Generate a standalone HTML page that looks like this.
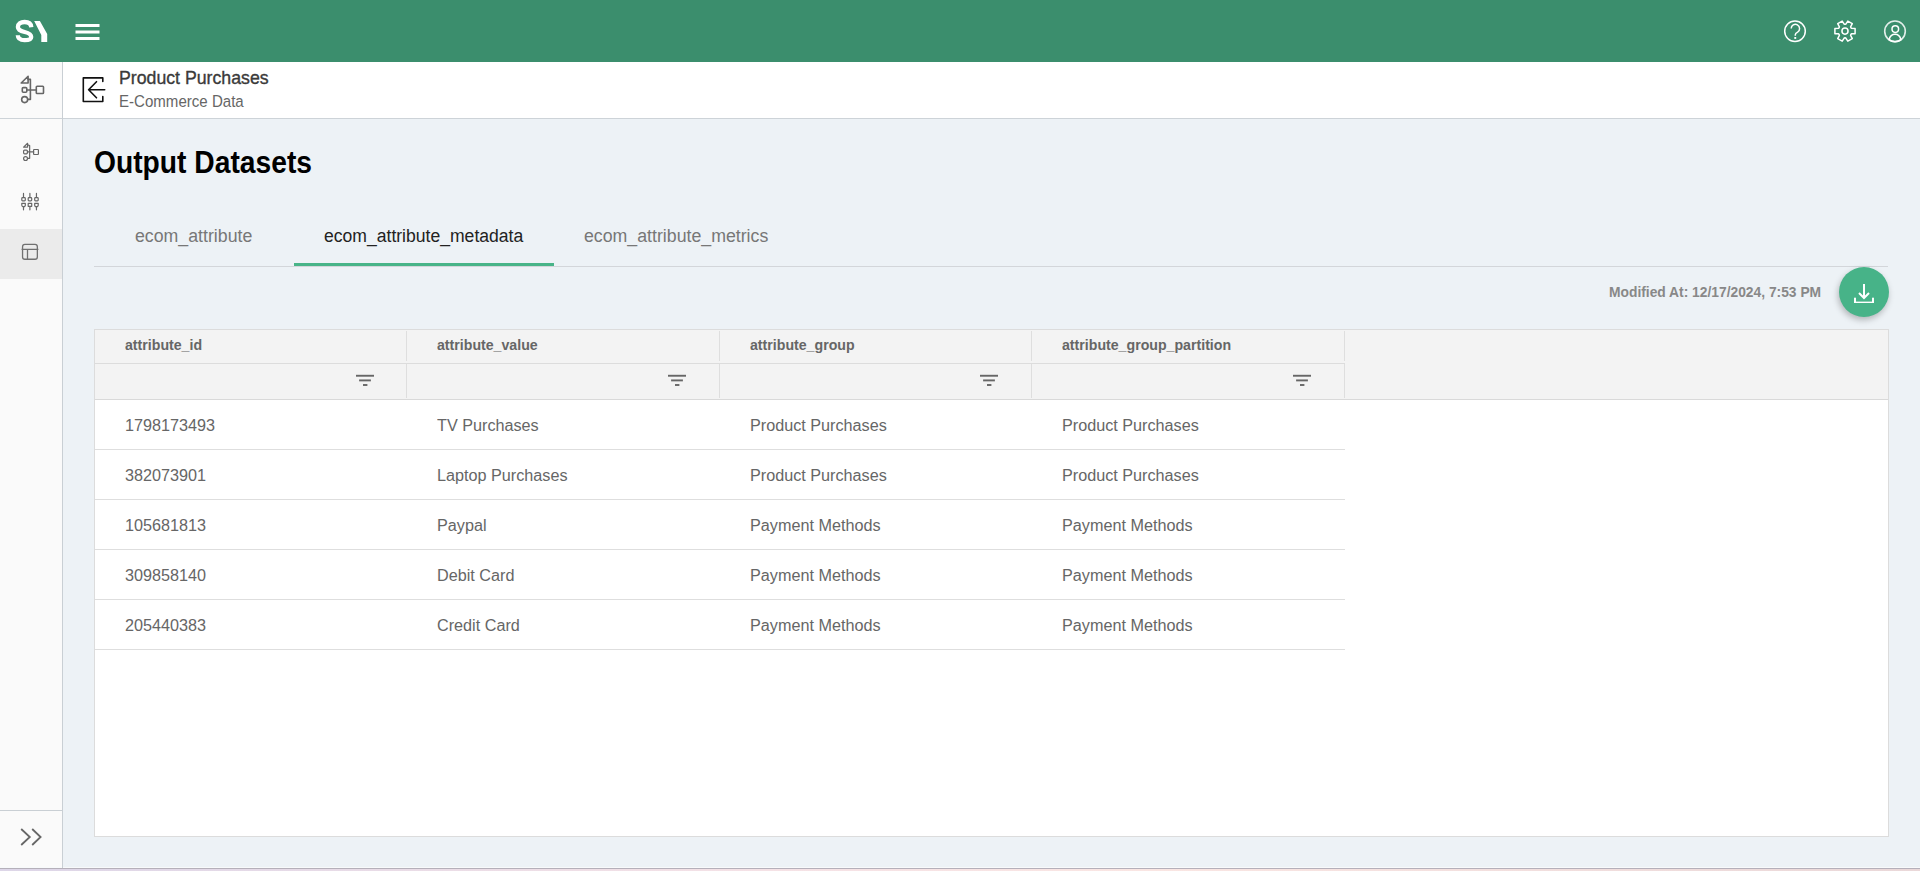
<!DOCTYPE html>
<html><head><meta charset="utf-8">
<style>
*{margin:0;padding:0;box-sizing:border-box}
html,body{width:1920px;height:871px;overflow:hidden;background:#edf2f6;font-family:"Liberation Sans",sans-serif}
.abs{position:absolute}
.t{position:absolute;white-space:nowrap;line-height:1;transform-origin:0 0}
#top{position:absolute;left:0;top:0;width:1920px;height:62px;background:#3b8e6d}
#side{position:absolute;left:0;top:62px;width:63px;height:805px;background:#fafafa;border-right:1px solid #c9cfd4}
#sub{position:absolute;left:63px;top:62px;width:1857px;height:57px;background:#fff;border-bottom:1px solid #cdd3d8}
#tabline{position:absolute;left:94px;top:266px;width:1794px;height:1px;background:#d3d6da}
#uline{position:absolute;left:294px;top:263px;width:260px;height:3px;background:#48b488}
#fab{position:absolute;left:1839px;top:267px;width:50px;height:50px;border-radius:50%;background:#47b388;box-shadow:-1px 3px 6px rgba(0,0,0,0.25)}
#tbl{position:absolute;left:94px;top:329px;width:1795px;height:508px;background:#fff;border:1px solid #dcdcdc}
#thead{position:absolute;left:0;top:0;width:1793px;height:70px;background:#f3f3f3;border-bottom:1px solid #d9d9d9}
.hsep{position:absolute;width:1px;background:#dedede}
.rowl{position:absolute;left:0;width:1250px;height:1px;background:#dedede}
.hd{font-weight:bold;font-size:14.6px;color:#666;transform:scaleX(0.97)}
.cell{font-size:16px;color:#666;transform:scaleX(1.012)}
.tab{font-size:18px;transform:scaleX(0.985)}
</style></head><body>
<div id="top">
  <svg class="abs" style="left:0;top:0" width="120" height="62" viewBox="0 0 120 62">
    <path d="M31.3 27.2 C31 23.6 28.2 22 24.6 22 C20.6 22 17.9 23.9 17.9 27 C17.9 30.3 21 31.2 24.6 32 C28.6 32.9 31.2 34 31.2 36.9 C31.2 39.9 28.3 40.1 24.6 40.1 C20.4 40.1 17.9 38.4 17.8 35.2" fill="none" stroke="#fff" stroke-width="4.3"/>
    <polygon points="34.2,21.1 39.9,21.1 47.2,33.9 47.2,42 41.3,42 41.3,35" fill="#fff"/>
    <rect x="75.5" y="24" width="24" height="3" fill="#fff"/>
    <rect x="75.5" y="30.5" width="24" height="3" fill="#fff"/>
    <rect x="75.5" y="37" width="24" height="3" fill="#fff"/>
  </svg>
  <svg class="abs" style="left:1760px;top:0" width="160" height="62" viewBox="1760 0 160 62">
    <circle cx="1795" cy="31.3" r="10.3" fill="none" stroke="#fff" stroke-width="1.5"/>
    <path d="M1791.2 28.6 A4.2 4.2 0 1 1 1797.6 32.1 Q1795.3 33.3 1795.3 34.8 V35.8" fill="none" stroke="#fff" stroke-width="1.5"/>
    <rect x="1794.3" y="37" width="1.9" height="1.9" fill="#fff"/>
    <path id="gear" d="M1851.43 28.34L1855.10 28.50L1855.10 33.70L1851.43 33.86Q1850.72 34.40 1850.61 35.29L1852.30 38.55L1847.80 41.15L1845.83 38.05Q1845.00 37.70 1844.17 38.05L1842.20 41.15L1837.70 38.55L1839.39 35.29Q1839.28 34.40 1838.57 33.86L1834.90 33.70L1834.90 28.50L1838.57 28.34Q1839.28 27.80 1839.39 26.91L1837.70 23.65L1842.20 21.05L1844.17 24.15Q1845.00 24.50 1845.83 24.15L1847.80 21.05L1852.30 23.65L1850.61 26.91Q1850.72 27.80 1851.43 28.34Z" fill="none" stroke="#fff" stroke-width="1.5" stroke-linejoin="round"/>
    <circle cx="1845" cy="31.1" r="3.05" fill="none" stroke="#fff" stroke-width="1.5"/>
    <circle cx="1895" cy="31.3" r="10.3" fill="none" stroke="#fff" stroke-opacity="0.85" stroke-width="1.6"/>
    <circle cx="1895.3" cy="29.1" r="3.3" fill="none" stroke="#fff" stroke-width="1.5"/>
    <path d="M1889 39.7 C1890 36 1892.3 34.3 1895 34.3 C1897.7 34.3 1900 36 1901 39.7 A10.3 10.3 0 0 1 1889 39.7 Z" fill="none" stroke="#fff" stroke-width="1.5"/>
  </svg>
</div>

<div id="side">
  <svg class="abs" style="left:0;top:-62px" width="62" height="930" viewBox="0 0 62 930" fill="none" stroke="#666" stroke-linejoin="round" stroke-linecap="round">
    <g stroke-width="1.6">
      <path d="M28.1 76.2 L21.2 83 H28.1 Z"/>
      <path d="M28.1 79.4 H30.4 V99.4 H27.8"/>
      <rect x="22.3" y="87.6" width="4.5" height="4.7" rx="1"/>
      <path d="M26.8 90 H36.3"/>
      <rect x="36.3" y="86.2" width="7.2" height="7.3" rx="0.8"/>
      <circle cx="24.65" cy="99.6" r="3"/>
    </g>
    <g stroke-width="1.2">
      <path d="M27.6 143.3 L23.6 147.1 H27.6 Z"/>
      <path d="M27.6 144.8 L29.65 145.6 V158.3 H28"/>
      <rect x="23.6" y="150.1" width="3.8" height="3.7" rx="1"/>
      <path d="M27.4 151.9 H33.6"/>
      <rect x="33.6" y="149.5" width="4.8" height="5" rx="0.5"/>
      <circle cx="25.55" cy="158.55" r="1.95"/>
    </g>
    <g stroke-width="1.2">
      <path d="M23.5 193.4 V197.5 M29.9 193.4 V197.5 M36.45 193.4 V197.5 M23.5 206.6 V209.8 M29.9 206.6 V209.8 M36.45 206.6 V209.8"/>
      <rect x="21.8" y="197.6" width="3.5" height="3.3" rx="0.8"/>
      <rect x="28.2" y="197.6" width="3.5" height="3.3" rx="0.8"/>
      <rect x="34.7" y="197.6" width="3.5" height="3.3" rx="0.8"/>
      <path d="M21.8 203.3 H25.3 V205.3 Q25.1 206.7 23.5 206.8 Q21.9 206.7 21.8 205.3 Z"/>
      <path d="M28.2 203.3 H31.7 V206.3 H28.2 Z"/>
      <path d="M34.7 203.3 H38.2 V205.3 Q38 206.7 36.45 206.8 Q34.9 206.7 34.7 205.3 Z"/>
    </g>
  </svg>
  <div class="abs" style="left:0;top:56px;width:62px;height:1px;background:#cdd3d8"></div>
  <div class="abs" style="left:0;top:167px;width:62px;height:50px;background:#ebebeb"></div>
  <svg class="abs" style="left:0;top:167px" width="62" height="50" viewBox="0 229 62 50" fill="none" stroke="#707070" stroke-width="1.3">
    <rect x="22.55" y="244.35" width="14.8" height="14.9" rx="2.3"/>
    <path d="M21.6 249.35 H38.4 M27.5 249.35 V260"/>
  </svg>
  <div class="abs" style="left:0;top:748px;width:62px;height:1px;background:#c9cfd4"></div>
  <svg class="abs" style="left:0;top:749px" width="62" height="56" viewBox="0 811 62 56" fill="none" stroke="#666" stroke-width="1.8">
    <path d="M21.2 829 L29.8 837 L21.2 845 M32.2 829 L40.6 837 L32.2 845"/>
  </svg>
</div>

<div id="sub">
  <svg class="abs" style="left:-63px;top:-62px" width="120" height="120" viewBox="0 0 120 120" fill="none" stroke="#111" stroke-width="1.6" stroke-linecap="round" stroke-linejoin="round">
    <path d="M102.8 81.4 V77.9 H83.3 V101.5 H102.8 V96.6"/>
    <path d="M104.7 89.8 H88.6 M96.5 81.7 L88.6 89.8 L96.5 97.8"/>
  </svg>
  <div class="t" style="left:56.1px;top:6.9px;font-size:18.4px;color:#3a3a3a;-webkit-text-stroke:0.35px #3a3a3a;transform:scaleX(0.963)">Product Purchases</div>
  <div class="t" style="left:56px;top:31.1px;font-size:16.3px;color:#666;transform:scaleX(0.925)">E-Commerce Data</div>
</div>

<div class="t" style="left:93.8px;top:145.6px;font-size:32px;font-weight:bold;color:#000;transform:scaleX(0.882)">Output Datasets</div>

<div class="t tab" style="left:134.9px;top:227.2px;color:#777">ecom_attribute</div>
<div class="t tab" style="left:323.5px;top:227.2px;color:#222;transform:scaleX(0.976)">ecom_attribute_metadata</div>
<div class="t tab" style="left:584.3px;top:227.2px;color:#777">ecom_attribute_metrics</div>
<div id="tabline"></div>
<div id="uline"></div>

<div class="t" style="left:1608.6px;top:284.6px;font-size:14.1px;font-weight:bold;color:#888;transform:scaleX(0.98)">Modified At: 12/17/2024, 7:53 PM</div>
<div id="fab"></div>
<svg class="abs" style="left:1839px;top:267px" width="50" height="50" viewBox="1839 267 50 50" fill="none" stroke="#fff" stroke-width="2">
  <path d="M1864 284 V298"/>
  <path d="M1859 293 L1864 298 L1869 293"/>
  <rect x="1854" y="297.7" width="2" height="5.3" fill="#fff" stroke="none"/><rect x="1872" y="297.7" width="2" height="5.3" fill="#fff" stroke="none"/><rect x="1854" y="301.6" width="20" height="1.4" fill="#fff" stroke="none"/>
</svg>

<div id="tbl">
<div id="thead"><div class="abs" style="left:0;top:33px;width:1250px;height:1px;background:#dcdcdc"></div></div>
<div class="t hd" style="left:30.2px;top:7.5px">attribute_id</div>
<div class="t hd" style="left:342.2px;top:7.5px">attribute_value</div>
<div class="t hd" style="left:654.7px;top:7.5px">attribute_group</div>
<div class="t hd" style="left:967.2px;top:7.5px">attribute_group_partition</div>
<div class="hsep" style="left:311px;top:1px;height:30px"></div>
<div class="hsep" style="left:311px;top:34px;height:34px"></div>
<div class="hsep" style="left:624px;top:1px;height:30px"></div>
<div class="hsep" style="left:624px;top:34px;height:34px"></div>
<div class="hsep" style="left:936px;top:1px;height:30px"></div>
<div class="hsep" style="left:936px;top:34px;height:34px"></div>
<div class="hsep" style="left:1249px;top:1px;height:30px"></div>
<div class="hsep" style="left:1249px;top:34px;height:34px"></div>
<svg class="abs" style="left:260.9px;top:44px" width="18" height="12" viewBox="0 0 18 12"><rect x="0" y="0.8" width="18" height="1.9" fill="#666"/><rect x="3.1" y="5.45" width="11.8" height="1.9" fill="#666"/><rect x="7" y="10.05" width="4.4" height="1.9" fill="#666"/></svg>
<svg class="abs" style="left:572.9px;top:44px" width="18" height="12" viewBox="0 0 18 12"><rect x="0" y="0.8" width="18" height="1.9" fill="#666"/><rect x="3.1" y="5.45" width="11.8" height="1.9" fill="#666"/><rect x="7" y="10.05" width="4.4" height="1.9" fill="#666"/></svg>
<svg class="abs" style="left:885.4px;top:44px" width="18" height="12" viewBox="0 0 18 12"><rect x="0" y="0.8" width="18" height="1.9" fill="#666"/><rect x="3.1" y="5.45" width="11.8" height="1.9" fill="#666"/><rect x="7" y="10.05" width="4.4" height="1.9" fill="#666"/></svg>
<svg class="abs" style="left:1197.9px;top:44px" width="18" height="12" viewBox="0 0 18 12"><rect x="0" y="0.8" width="18" height="1.9" fill="#666"/><rect x="3.1" y="5.45" width="11.8" height="1.9" fill="#666"/><rect x="7" y="10.05" width="4.4" height="1.9" fill="#666"/></svg>
<div class="t cell" style="left:30.3px;top:88.4px">1798173493</div>
<div class="t cell" style="left:342.3px;top:88.4px">TV Purchases</div>
<div class="t cell" style="left:654.8px;top:88.4px">Product Purchases</div>
<div class="t cell" style="left:967.3px;top:88.4px">Product Purchases</div>
<div class="rowl" style="top:119px"></div>
<div class="t cell" style="left:30.3px;top:138.4px">382073901</div>
<div class="t cell" style="left:342.3px;top:138.4px">Laptop Purchases</div>
<div class="t cell" style="left:654.8px;top:138.4px">Product Purchases</div>
<div class="t cell" style="left:967.3px;top:138.4px">Product Purchases</div>
<div class="rowl" style="top:169px"></div>
<div class="t cell" style="left:30.3px;top:188.4px">105681813</div>
<div class="t cell" style="left:342.3px;top:188.4px">Paypal</div>
<div class="t cell" style="left:654.8px;top:188.4px">Payment Methods</div>
<div class="t cell" style="left:967.3px;top:188.4px">Payment Methods</div>
<div class="rowl" style="top:219px"></div>
<div class="t cell" style="left:30.3px;top:238.4px">309858140</div>
<div class="t cell" style="left:342.3px;top:238.4px">Debit Card</div>
<div class="t cell" style="left:654.8px;top:238.4px">Payment Methods</div>
<div class="t cell" style="left:967.3px;top:238.4px">Payment Methods</div>
<div class="rowl" style="top:269px"></div>
<div class="t cell" style="left:30.3px;top:288.4px">205440383</div>
<div class="t cell" style="left:342.3px;top:288.4px">Credit Card</div>
<div class="t cell" style="left:654.8px;top:288.4px">Payment Methods</div>
<div class="t cell" style="left:967.3px;top:288.4px">Payment Methods</div>
<div class="rowl" style="top:319px"></div>
</div>

<div class="abs" style="left:0;top:867px;width:1920px;height:1px;background:rgba(255,255,255,0.6)"></div>
<div class="abs" style="left:62px;top:867px;width:1px;height:1px;background:#c9cfd4"></div>
<div class="abs" style="left:0;top:868px;width:1920px;height:1px;background:#b5b0ba"></div>
<div class="abs" style="left:0;top:869px;width:1920px;height:2px;background:linear-gradient(90deg,#ddd6e8 0%,#f5e2e6 40%,#fae6e3 60%,#ead8d9 100%)"></div>
</body></html>
